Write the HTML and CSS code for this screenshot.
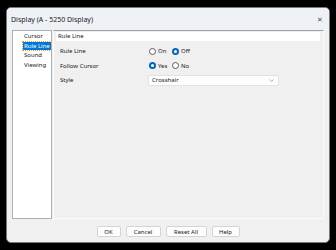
FILE: index.html
```html
<!DOCTYPE html>
<html lang="en">

<head>
  <meta charset="UTF-8">
  <meta name="viewport" content="width=device-width, initial-scale=1.0">
  <title>Display (A - 5250 Display)</title>
  <link rel="stylesheet" href="styles.css">
</head>

<body>
  <div class="window">
    <div class="titlebar">
      <span class="title">Display (A - 5250 Display)</span>
      <span class="close">&#x2715;</span>
    </div>

    <div class="content">
      <!-- category list -->
      <ul class="tree">
        <li>Cursor</li>
        <li class="selected"><span>Rule Line</span></li>
        <li>Sound</li>
        <li>Viewing</li>
      </ul>

      <!-- settings for the selected category -->
      <div class="panel">
        <div class="panel-header">Rule Line</div>
        <div class="row">
          <span class="label">Rule Line</span>
          <label class="radio"><span class="dot"></span>On</label>
          <label class="radio"><span class="dot checked"></span>Off</label>
        </div>
        <div class="row">
          <span class="label">Follow Cursor</span>
          <label class="radio"><span class="dot checked"></span>Yes</label>
          <label class="radio"><span class="dot"></span>No</label>
        </div>
        <div class="row">
          <span class="label">Style</span>
          <div class="select">
            <span>Crosshair</span>
            <svg width="5" height="3" viewBox="0 0 5 3">
              <path d="M0.5 0.5 L2.5 2.5 L4.5 0.5" fill="none" stroke="#8a8a8a" stroke-width="0.7" />
            </svg>
          </div>
        </div>
      </div>
    </div>

    <div class="footer">
      <button class="btn btn-ok">OK</button>
      <button class="btn btn-cancel">Cancel</button>
      <button class="btn btn-reset">Reset All</button>
      <button class="btn btn-help">Help</button>
    </div>
  </div>
</body>

</html>
```

FILE: styles.css
```css
body {
  margin: 0;
  padding: 7px 6px;
  background-color: #000;
  font-family: "Noto Sans", sans-serif;
  font-size: 6px;
  color: #1a1a1a;
  height: 250px;
  box-sizing: border-box;
}

.window {
  width: 324px;
  height: 236px;
  background-color: #f0f0f0;
  border: 1px solid #7a7a7a;
  border-radius: 5px;
  box-sizing: border-box;
  display: flex;
  flex-direction: column;
  overflow: hidden;
}

.titlebar {
  height: 22px;
  flex-shrink: 0;
  background-color: #eef2f7;
  display: flex;
  align-items: center;
  justify-content: space-between;
  padding: 0 6px 0 4px;
  font-size: 7px;
}

.close {
  font-size: 7px;
  color: #555;
}

.content {
  height: 189px;
  display: flex;
  gap: 1px;
  padding: 0 5px;
}

.tree {
  width: 40px;
  margin: 0;
  padding: 1px 0 0 0;
  list-style: none;
  background-color: #fff;
  border: 1px solid #a9b0b8;
  box-sizing: border-box;
}

.tree li {
  height: 9.5px;
  line-height: 9.5px;
  padding-left: 11px;
}

.tree li.selected span {
  background-color: #0078d7;
  color: #fff;
  outline: 1px dotted #f0a030;
  padding: 0 1px;
  margin-left: -1px;
}

.panel {
  flex: 1;
  border: 1px solid #fafafa;
  border-top: 1px solid #a0a0a0;
  box-sizing: border-box;
  padding: 1px 3px 0 2px;
}

.panel-header {
  background-color: #fff;
  height: 9px;
  line-height: 9px;
  padding-left: 2px;
  margin-bottom: 3px;
}

.row {
  display: flex;
  align-items: center;
  height: 14.5px;
  padding-left: 4px;
}

.label {
  width: 89px;
}

.radio {
  display: flex;
  align-items: center;
  gap: 2px;
  width: 23px;
}

.dot {
  width: 7px;
  height: 7px;
  border: 1px solid #5a5a5a;
  border-radius: 50%;
  box-sizing: border-box;
  background-color: #fff;
}

.dot.checked {
  border: 2px solid #0067c0;
}

.select {
  width: 131px;
  height: 11px;
  margin-left: -1px;
  background-color: #fdfdfd;
  border: 1px solid #e2e2e2;
  border-radius: 2px;
  box-sizing: border-box;
  display: flex;
  align-items: center;
  justify-content: space-between;
  padding: 0 4px 0 3px;
}

.footer {
  flex: 1;
  display: flex;
  justify-content: center;
  align-items: center;
  gap: 5px;
  padding-top: 2px;
}

.btn {
  height: 11px;
  padding: 0;
  font-family: "Noto Sans", sans-serif;
  font-size: 6px;
  color: #1a1a1a;
  background-color: #fdfdfd;
  border: 1px solid #d4d4d4;
  border-radius: 2px;
}

.btn-ok {
  width: 24px;
}

.btn-cancel {
  width: 35px;
}

.btn-reset {
  width: 41px;
}

.btn-help {
  width: 28px;
}
```
